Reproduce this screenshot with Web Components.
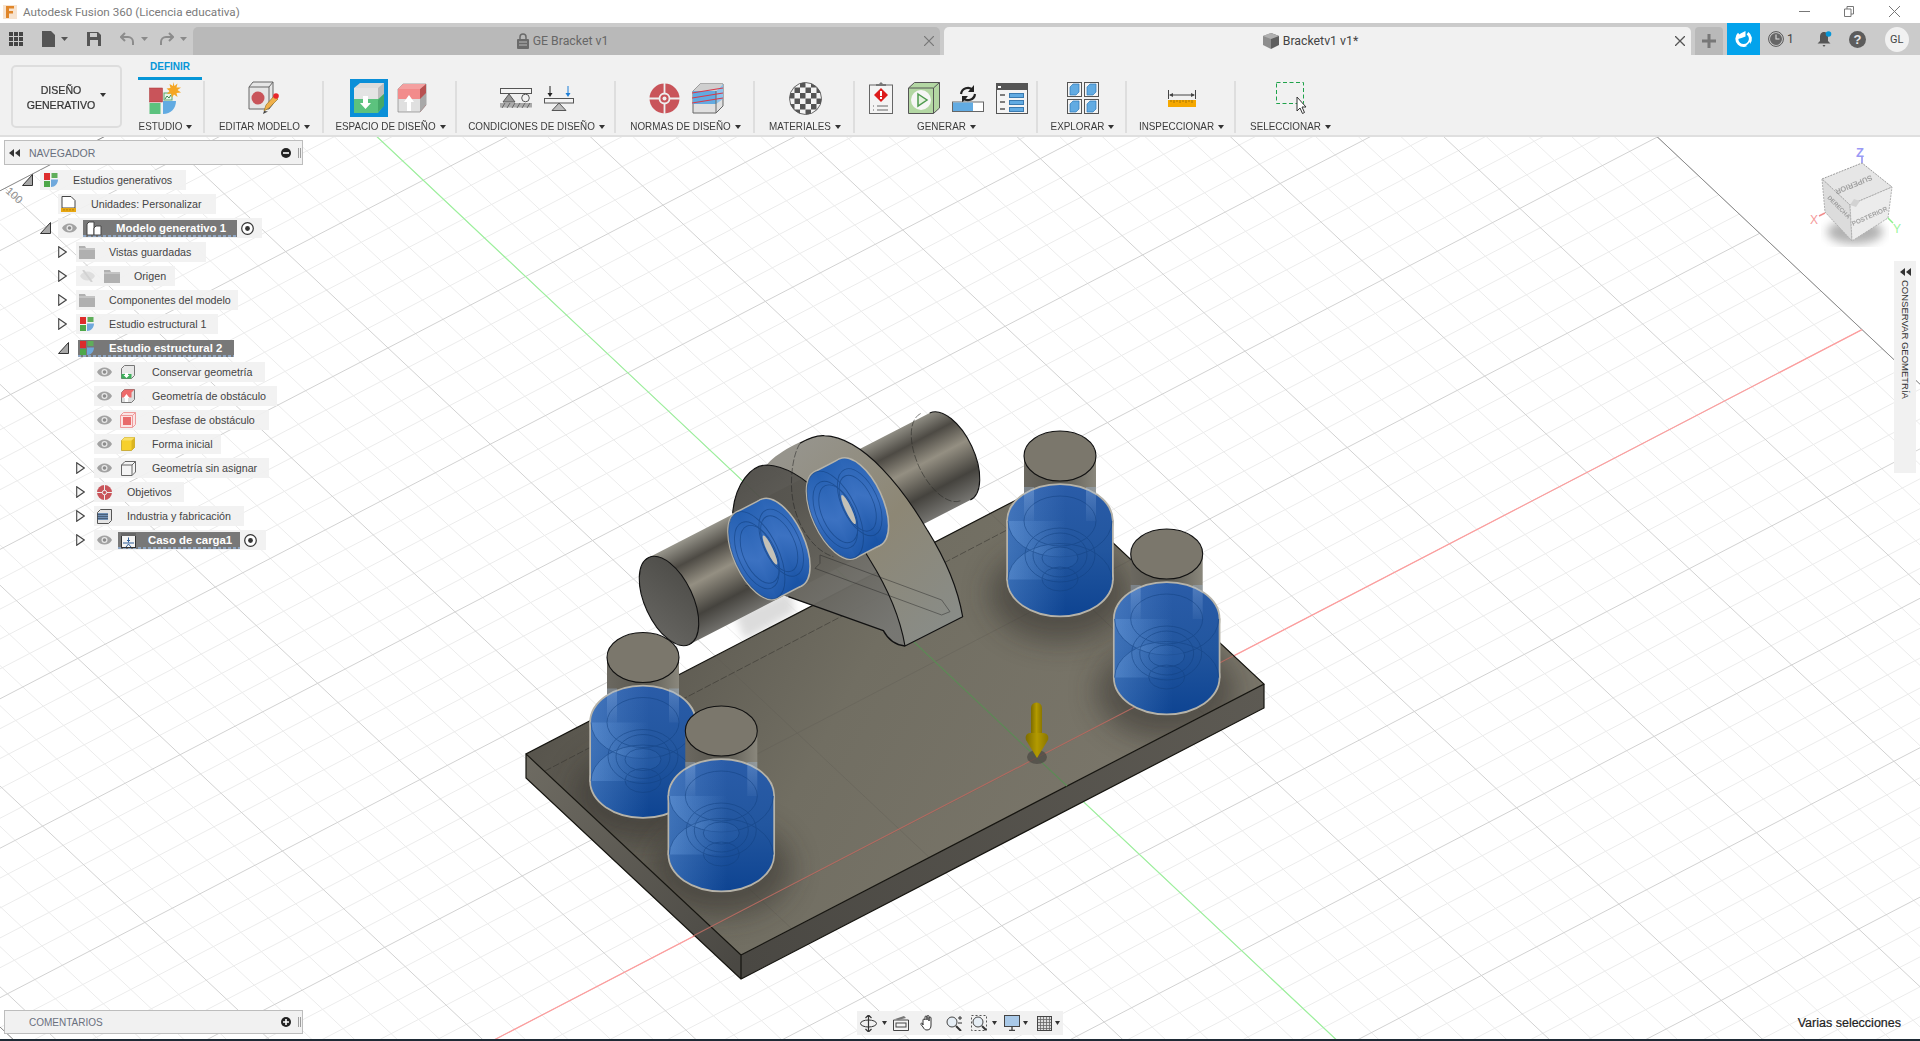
<!DOCTYPE html>
<html lang="es">
<head>
<meta charset="utf-8">
<title>Autodesk Fusion 360</title>
<style>
  html, body { margin: 0; height: 100%; overflow: hidden; background: #fff; font-family: "Liberation Sans", Arial, sans-serif; }
  svg { display: block; }
</style>
</head>
<body>
<fusion-app>
  <title-bar></title-bar>
  <tab-bar></tab-bar>
  <ribbon-bar>
    <rib-group label="ESTUDIO" width="67" shift="12">
      <svg width="33" height="32" viewBox="0 0 33 32"><rect x="0.5" y="6" width="13" height="14" fill="#c9545a" stroke="#a33" stroke-width=".5"/><rect x="0.5" y="21" width="11" height="11" fill="#5cc27e"/><path d="M14 19h13c0 7-5 13-13 13z" fill="#62abe2"/><rect x="15" y="11" width="8" height="7" fill="#e8f4e8" stroke="#5aa56a"/><path d="M16 17l2-3 2 2 2-3" fill="none" stroke="#3a8a50"/><path d="M24 0l1.5 4 3-2.500-1 4 4.500 0-3.500 2.500 3.500 2.500-4.500.5 1 4-3.500-2.500-2 3-1-4-4 .5 2.500-3-3-2.500 4-.5-1-4 3.500 2z" fill="#f5a623"/></svg>
    </rib-group>
    <rib-group label="EDITAR MODELO" width="119">
      <svg width="33" height="34" viewBox="0 0 33 34"><path d="M1 6l4-5h20v22l-4 5H1z" fill="#e6e6e6" stroke="#666"/><path d="M1 6h20v22M21 6l4-5" fill="none" stroke="#666"/><circle cx="10" cy="17" r="6.500" fill="#c9545a"/><path d="M16 30l2-6 8-9 4 3-9 9z" fill="#f0b04a" stroke="#8a6a20" stroke-width=".6"/><path d="M15 33l1-3 4 .5z" fill="#444"/><circle cx="28" cy="15" r="2.800" fill="#e8252a"/></svg>
    </rib-group>
    <rib-group label="ESPACIO DE DISEÑO" width="133" gap="9">
      <svg width="38" height="38" viewBox="0 0 38 38" style="margin:-1px 0 0 -5px"><rect width="38" height="38" fill="#0a8fd8"/><path d="M4 9l6-5h24v22l-6 6H4z" fill="#dcdcdc"/><path d="M4 9h24l6-5-6 5v11H4z" fill="#e4e4e4"/><path d="M28 9l6-5v12l-6 6z" fill="#bdbdbd"/><path d="M4 20h24l6-5v11l-6 8H4z" fill="#5cc27e"/><path d="M28 21l6-6v12l-6 6z" fill="#45a868"/><path d="M13 17h5v7h3l-5.500 6-5.500-6h3z" fill="#fff"/></svg>
      <svg width="30" height="31" viewBox="0 0 30 31"><path d="M1 6l5-5h23v21l-6 7H1z" fill="#e0e0e0" stroke="#777" stroke-width=".6"/><path d="M1 6h22v10H1z" fill="#f28b8b"/><path d="M1 6l5-5h23l-6 5z" fill="#f4a0a0"/><path d="M23 6l6-5v21l-6 7z" fill="#b85050"/><path d="M23 16l6-6v12l-6 7z" fill="#a8a8a8"/><path d="M10 28v-9H7l5-7 5 7h-3v9z" fill="#fff"/></svg>
    </rib-group>
    <rib-group label="CONDICIONES DE DISEÑO" width="159" gap="12">
      <svg width="32" height="20" viewBox="0 0 32 20"><rect x=".5" y=".5" width="31" height="5" fill="#f4f4f4" stroke="#555"/><path d="M9 6l6 8H3z" fill="#999" stroke="#555"/><circle cx="25.500" cy="10" r="3.800" fill="#f4f4f4" stroke="#555"/><rect y="15" width="32" height="4.500" fill="#aaa"/><path d="M2 20l3-5M7 20l3-5M12 20l3-5M17 20l3-5M22 20l3-5M27 20l3-5" stroke="#666"/></svg>
      <svg width="30" height="25" viewBox="0 0 30 25"><path d="M6 0v9" stroke="#222"/><path d="M3.500 7l2.500 4 2.500-4z" fill="#222"/><path d="M24 0v9" stroke="#1d7fd8"/><path d="M21.500 7l2.500 4 2.500-4z" fill="#1d7fd8"/><rect x=".5" y="12.500" width="29" height="4.500" fill="#f4f4f4" stroke="#555"/><path d="M15 17l7 7.500H8z" fill="#bbb" stroke="#555"/></svg>
    </rib-group>
    <rib-group label="NORMAS DE DISEÑO" width="139" gap="12">
      <svg width="31" height="31" viewBox="0 0 31 31" style="margin-left:1px"><circle cx="15.500" cy="15.500" r="15" fill="#c9545a"/><path d="M0 15.500h31M15.500 0v31" stroke="#eee" stroke-width="1.800"/><circle cx="15.500" cy="15.500" r="5" fill="#c9545a" stroke="#eee" stroke-width="1.800"/><circle cx="15.500" cy="15.500" r="2" fill="#eee"/></svg>
      <svg width="32" height="31" viewBox="0 0 32 31"><path d="M1 8l7-7h23v22l-7 7H1z" fill="#e0e0e0" stroke="#666"/><path d="M1 8h23v13H1z" fill="#62abe2"/><path d="M24 8l7-7v15l-7 5z" fill="#8cc3ec"/><path d="M1 8l7-7h23l-7 7z" fill="#cfcfcf"/><path d="M24 8v22" stroke="#666"/><path d="M0 10l31-5M0 15l31-5M0 20l31-5" stroke="#d8394a" stroke-width="1.200"/></svg>
    </rib-group>
    <rib-group label="MATERIALES" width="100">
      <checker-icon></checker-icon>
    </rib-group>
    <rib-group label="GENERAR" width="183" gap="12">
      <svg width="24" height="32" viewBox="0 0 24 32" style="margin-left:4px"><rect x=".5" y="3" width="23" height="28.500" fill="#f4f4f4" stroke="#666"/><path d="M7 4V2h3l2-2 2 2h3v2z" fill="#777"/><path d="M12 6l7 7-7 7-7-7z" fill="#dd1c1c"/><rect x="11" y="9" width="2" height="5" fill="#fff"/><rect x="11" y="15" width="2" height="2" fill="#fff"/><path d="M4 24h1M8 24h11M4 28h1M8 28h11" stroke="#666" stroke-width="1.200"/></svg>
      <svg width="32" height="32" viewBox="0 0 32 32" style="margin-left:3px"><path d="M.5 6l6-5.500h25V26l-6 5.500H.5z" fill="#b3d7a3" stroke="#555"/><path d="M.5 6h25v25.500M25.500 6l6-5.500" fill="none" stroke="#555"/><circle cx="13" cy="18" r="10" fill="#f6f6f6"/><path d="M10 12l9 6-9 6z" fill="#e6f2e0" stroke="#4e9a4e" stroke-width="1.500"/></svg>
      <svg width="32" height="27" viewBox="0 0 32 27"><path d="M9 9a7 7 0 0 1 12-4M23 9a7 7 0 0 1-12 4" fill="none" stroke="#222" stroke-width="2.200"/><path d="M22 0v7h-6z" fill="#222"/><path d="M10 18v-7h6z" fill="#222"/><rect x=".5" y="17" width="31" height="9.500" fill="#fff" stroke="#666"/><rect x="1" y="17.500" width="20" height="8.500" fill="#62abe2"/></svg>
      <svg width="32" height="31" viewBox="0 0 32 31"><rect x=".5" y=".5" width="31" height="30" fill="#f4f4f4" stroke="#555"/><rect width="32" height="7" fill="#555"/><rect x="2" y="3" width="3" height="2" fill="#fff"/><path d="M4 12h5M4 19h5M4 26h5" stroke="#555" stroke-width="1.300"/><rect x="13.500" y="10.500" width="14" height="4" fill="#62abe2" stroke="#3a7ab0"/><rect x="13.500" y="17.500" width="14" height="4" fill="#62abe2" stroke="#3a7ab0"/><rect x="13.500" y="24.500" width="14" height="4" fill="#62abe2" stroke="#3a7ab0"/></svg>
    </rib-group>
    <rib-group label="EXPLORAR" width="89">
      <svg width="32" height="32" viewBox="0 0 32 32"><g><rect x=".5" y=".5" width="14" height="14" fill="#f4f4f4" stroke="#555"/><path d="M3 5l3-3h6v8l-3 3H3z" fill="#62abe2" stroke="#2f7ab8" stroke-width=".7"/></g><g transform="translate(17 0)"><rect x=".5" y=".5" width="14" height="14" fill="#f4f4f4" stroke="#555"/><path d="M3 5l3-3h6v8l-3 3H3z" fill="#62abe2" stroke="#2f7ab8" stroke-width=".7"/></g><g transform="translate(0 17)"><rect x=".5" y=".5" width="14" height="14" fill="#f4f4f4" stroke="#555"/><path d="M3 5l3-3h6v8l-3 3H3z" fill="#62abe2" stroke="#2f7ab8" stroke-width=".7"/></g><g transform="translate(17 17)"><rect x=".5" y=".5" width="14" height="14" fill="#f4f4f4" stroke="#555"/><path d="M3 5l3-3h6v8l-3 3H3z" fill="#62abe2" stroke="#2f7ab8" stroke-width=".7"/></g></svg>
    </rib-group>
    <rib-group label="INSPECCIONAR" width="109">
      <svg width="28" height="17" viewBox="0 0 28 17"><path d="M.5 0v9M27.500 0v9M2 5h24" stroke="#444"/><path d="M1 5l4-2v4zM27 5l-4-2v4z" fill="#444"/><rect y="10" width="28" height="7" fill="#f5a800"/><path d="M3 10v2M6 10v3M9 10v2M12 10v3M15 10v2M18 10v3M21 10v2M24 10v3" stroke="#8a6200" stroke-width=".7"/></svg>
    </rib-group>
    <rib-group label="SELECCIONAR" width="109" last>
      <svg width="32" height="32" viewBox="0 0 32 32" style="margin-left:2px"><rect x=".5" y=".5" width="27" height="21" fill="none" stroke="#1fa24a" stroke-dasharray="4 2.500"/><path d="M21 15v14l3-3 2.500 5.500 2-1-2.500-5.500h4z" fill="#fff" stroke="#333"/></svg>
    </rib-group>
  </ribbon-bar>
  <view-port></view-port>
</fusion-app>

<script>
class FusionApp extends HTMLElement {
  connectedCallback() {
    this.attachShadow({ mode: "open" });
    this.shadowRoot.innerHTML = `
      <style>
        :host { display: flex; flex-direction: column; width: 1920px; height: 1041px; overflow: hidden;
                font-family: "Liberation Sans", Arial, sans-serif; color: #3c3c3c; }
      </style>
      <slot></slot>`;
  }
}

class TitleBar extends HTMLElement {
  connectedCallback() {
    this.attachShadow({ mode: "open" });
    this.shadowRoot.innerHTML = `
      <style>
        :host { display: flex; align-items: center; height: 23px; background: #fff; padding-left: 3px; flex: none; }
        .name { margin-left: 6px; font: 11.7px Roboto, sans-serif; color: #7b7b7b; flex: 1; }
        .win { display: flex; align-items: center; }
        .win svg { display: block; }
      </style>
      <svg width="14" height="14" viewBox="0 0 14 14"><rect width="14" height="14" fill="#f7e3cf"/><path d="M3 1h8v2.500H6v2.500h4v2.500H6V13H3z" fill="#e0862a"/></svg>
      <span class="name">Autodesk Fusion 360 (Licencia educativa)</span>
      <div class="win">
        <svg width="11" height="11" viewBox="0 0 11 11" style="margin-right:34px"><path d="M0 5.500h11" stroke="#777"/></svg>
        <svg width="10" height="11" viewBox="0 0 10 11" style="margin-right:35px"><path d="M.5 3h6.500v7.500H.5zM3 3V.5h6.500V8H7" fill="none" stroke="#777"/></svg>
        <svg width="11" height="11" viewBox="0 0 11 11" style="margin-right:20px"><path d="M0 0l11 11M11 0L0 11" stroke="#777"/></svg>
      </div>`;
  }
}

class TabBar extends HTMLElement {
  connectedCallback() {
    this.attachShadow({ mode: "open" });
    const drop = `<svg width="7" height="4" viewBox="0 0 7 4"><path d="M0 0h7L3.500 4z" fill="#555"/></svg>`;
    this.shadowRoot.innerHTML = `
      <style>
        :host { display: flex; align-items: flex-end; height: 32px; background: #cbcbcb; flex: none; }
        .tools { display: flex; align-items: center; width: 193px; height: 32px; padding-left: 9px; box-sizing: border-box; }
        .tab { display: flex; align-items: center; justify-content: center; position: relative; width: 747px; height: 28px;
               box-sizing: border-box; font: 12.3px Roboto, sans-serif; border-radius: 5px 5px 0 0; }
        .tab.off { background: #b9b9b9; color: #666; margin-right: 4px; padding-right: 8px; }
        .tab.on { background: #f1f1f1; color: #444; margin-right: 4px; padding-right: 14px; }
        .tab span { margin-left: 4px; }
        .x { position: absolute; right: 6px; top: 9px; }
        .plus { display: flex; align-items: center; justify-content: center; width: 28px; height: 28px; background: #b9b9b9;
                border-radius: 4px 4px 0 0; margin-right: 4px; }
        .cloud { display: flex; align-items: center; justify-content: center; width: 33px; height: 32px; background: #03a3ec; }
        .right { display: flex; align-items: center; height: 32px; flex: 1; }
        .num { font: 12px Roboto, sans-serif; color: #444; margin-left: 3px; }
        .avatar { width: 24px; height: 25px; border-radius: 50%; background: #f1f1f1; margin-left: 19px;
                  display: flex; align-items: center; justify-content: center; font: 11px Roboto, sans-serif; color: #444; }
      </style>
      <div class="tools">
        <svg width="14" height="14" viewBox="0 0 14 14" fill="#444"><rect width="4" height="4"/><rect x="5" width="4" height="4"/><rect x="10" width="4" height="4"/><rect y="5" width="4" height="4"/><rect x="5" y="5" width="4" height="4"/><rect x="10" y="5" width="4" height="4"/><rect y="10" width="4" height="4"/><rect x="5" y="10" width="4" height="4"/><rect x="10" y="10" width="4" height="4"/></svg>
        <svg width="13" height="16" viewBox="0 0 13 16" style="margin-left:19px"><path d="M0 0h9l4 4v12H0z" fill="#555"/></svg>
        <span style="margin-left:6px;display:flex">${drop}</span>
        <svg width="14" height="14" viewBox="0 0 14 14" style="margin-left:19px"><path d="M0 0h11l3 3v11H0z" fill="#555"/><rect x="3" y="1" width="7" height="4" fill="#cbcbcb"/><rect x="3" y="8" width="8" height="6" fill="#cbcbcb"/></svg>
        <svg width="14" height="14" viewBox="0 0 14 14" style="margin-left:19px"><path d="M5 1L1 5l4 4M1 5h7a5 5 0 0 1 5 5v3" fill="none" stroke="#8c8c8c" stroke-width="2"/></svg>
        <span style="margin-left:7px;display:flex;opacity:.55">${drop}</span>
        <svg width="14" height="14" viewBox="0 0 14 14" style="margin-left:12px"><path d="M9 1l4 4-4 4M13 5H6a5 5 0 0 0-5 5v3" fill="none" stroke="#8c8c8c" stroke-width="2"/></svg>
        <span style="margin-left:6px;display:flex;opacity:.55">${drop}</span>
      </div>
      <div class="tab off">
        <svg width="12" height="16" viewBox="0 0 12 16"><path d="M3 7V4a3 3 0 0 1 6 0v3" fill="none" stroke="#6a6a6a" stroke-width="1.500"/><rect y="6" width="12" height="10" rx="1" fill="#6a6a6a"/><path d="M2 9h8M2 12h8" stroke="#b9b9b9"/></svg>
        <span>GE Bracket v1</span>
        <svg class="x" width="10" height="10" viewBox="0 0 10 10"><path d="M0 0l10 10M10 0L0 10" stroke="#777" stroke-width="1.200"/></svg>
      </div>
      <div class="tab on">
        <svg width="16" height="16" viewBox="0 0 16 16"><path d="M8 0l8 3v9l-8 4z" fill="#5f5f5f"/><path d="M8 0L0 3v9l8 4z" fill="#8e8e8e"/><path d="M0 3l8-3 8 3-8 3z" fill="#b0b0b0"/></svg>
        <span>Bracketv1 v1*</span>
        <svg class="x" width="10" height="10" viewBox="0 0 10 10"><path d="M0 0l10 10M10 0L0 10" stroke="#555" stroke-width="1.300"/></svg>
      </div>
      <div class="plus"><svg width="14" height="14" viewBox="0 0 14 14"><path d="M7 0v14M0 7h14" stroke="#777" stroke-width="3"/></svg></div>
      <div class="cloud"><svg width="18" height="18" viewBox="0 0 18 18"><path d="M12.500 3.200a6.800 6.800 0 1 1-8.500.6" fill="none" stroke="#fff" stroke-width="3"/><path d="M3 9a6 6 0 0 1 3.500-6l4-2v5.500l-4 1.500z" fill="#fff"/><path d="M11 16l4-4v5z" fill="#03a3ec"/></svg></div>
      <div class="right">
        <svg width="16" height="16" viewBox="0 0 16 16" style="margin-left:8px"><circle cx="8" cy="8" r="7.400" fill="none" stroke="#555"/><circle cx="8" cy="8" r="6" fill="#666"/><path d="M8 3.500V8h3.500" fill="none" stroke="#ddd" stroke-width="1.100"/></svg>
        <span class="num">1</span>
        <svg width="15" height="17" viewBox="0 0 15 17" style="margin-left:23px"><path d="M7 1c3 0 4 2.500 4 5v4l2.500 2.500h-13L3 10V6c0-2.500 1-5 4-5z" fill="#555"/><path d="M5.500 14h3L7 16z" fill="#555"/><circle cx="11.500" cy="3" r="2.800" fill="#0696d7"/></svg>
        <svg width="17" height="17" viewBox="0 0 17 17" style="margin-left:17px"><circle cx="8.500" cy="8.500" r="8.500" fill="#5c5c5c"/><text x="8.500" y="13" font-family="Liberation Sans" font-size="13" font-weight="700" fill="#e6e6e6" text-anchor="middle">?</text></svg>
        <div class="avatar">GL</div>
      </div>`;
  }
}

class RibbonBar extends HTMLElement {
  connectedCallback() {
    this.attachShadow({ mode: "open" });
    this.shadowRoot.innerHTML = `
      <style>
        :host { display: flex; height: 82px; box-sizing: border-box; background: #f1f1f1; border-bottom: 2px solid #dfdfdf;
                padding-left: 11px; flex: none; }
        .mode { width: 111px; height: 63px; margin: 10px 16px 0 0; box-sizing: border-box; border: 2px solid #dddddd; border-radius: 5px;
                display: flex; align-items: center; justify-content: center; font-size: 10.6px; line-height: 14px;
                text-align: center; color: #333; -webkit-text-stroke: .2px #333; gap: 5px; }
        .mode span { transform: scaleY(1.1); }
        .mode i { border: 3px solid transparent; border-top: 4px solid #333; border-bottom: 0; margin-bottom: 4px; }
        .side { display: flex; flex-direction: column; }
        .head { height: 25px; flex: none; }
        .head span { display: block; box-sizing: border-box; width: 64px; height: 25px; text-align: center; padding-top: 6px;
                     border-bottom: 3px solid #0696d7; color: #0696d7; font-size: 10px; font-weight: 700; }
        .groups { display: flex; }
      </style>
      <div class="mode"><span>DISEÑO<br>GENERATIVO</span><i></i></div>
      <div class="side">
        <div class="head"><span>DEFINIR</span></div>
        <div class="groups"><slot></slot></div>
      </div>`;
  }
}

class RibGroup extends HTMLElement {
  connectedCallback() {
    this.attachShadow({ mode: "open" });
    const w = this.getAttribute("width"), shift = this.getAttribute("shift") || 0, gap = this.getAttribute("gap") || 0;
    const line = this.hasAttribute("last") ? "none" : "2px solid #dedede";
    this.shadowRoot.innerHTML = `
      <style>
        :host { display: block; width: ${w}px; height: 54px; box-sizing: border-box; position: relative; flex: none; }
        .col { display: flex; flex-direction: column; align-items: center; height: 54px; padding-right: ${shift}px; box-sizing: border-box; }
        .sep { position: absolute; right: 0; top: 1px; bottom: 1px; border-right: ${line}; }
        .icons { display: flex; align-items: center; justify-content: center; height: 36px; gap: ${gap}px; }
        .label { display: flex; align-items: center; gap: 4px; margin-top: 5px; font-size: 9.9px; line-height: 12px; color: #3c3c3c; white-space: nowrap; }
        .label b { font-weight: 400; transform: scaleY(1.14); }
        .label i { border: 3px solid transparent; border-top: 4px solid #333; border-bottom: 0; }
        ::slotted(svg) { display: block; }
      </style>
      <div class="col">
        <div class="icons"><slot></slot></div>
        <div class="label"><b>${this.getAttribute("label")}</b><i></i></div>
      </div>
      <div class="sep"></div>`;
  }
}

class CheckerIcon extends HTMLElement {
  connectedCallback() {
    this.attachShadow({ mode: "open" });
    let cells = "";
    for (let r = 0; r < 6; r++) for (let c = 0; c < 6; c++)
      if ((r + c) % 2 === 0) cells += `<rect x="${c * 5.5}" y="${r * 5.5}" width="5.5" height="5.5"/>`;
    this.shadowRoot.innerHTML = `
      <style>:host { display: block; } svg { display: block; }</style>
      <svg width="33" height="33" viewBox="0 0 33 33">
        <clipPath id="ball"><ellipse cx="16.500" cy="16.500" rx="16" ry="16"/></clipPath>
        <circle cx="16.500" cy="16.500" r="16" fill="#f4f4f4" stroke="#666"/>
        <g clip-path="url(#ball)" fill="#555">${cells}</g>
      </svg>`;
  }
}

/* small icons of the browser tree */
const eye = `<svg width="15" height="10" viewBox="0 0 15 10"><path d="M0 5c3-6 12-6 15 0-3 6-12 6-15 0z" fill="#a2a2a2"/><circle cx="7.500" cy="5" r="3" fill="#e8e8e8"/><circle cx="7.500" cy="5" r="1.800" fill="#8c8c8c"/></svg>`;
const eyeOff = `<svg width="15" height="12" viewBox="0 0 15 12"><path d="M0 6c3-6 12-6 15 0-3 6-12 6-15 0z" fill="#dedede"/><path d="M3 0l9 12" stroke="#d2d2d2" stroke-width="2"/></svg>`;
const folder = `<svg width="16" height="13" viewBox="0 0 16 13"><path d="M0 0h6l1 2h9v11H0z" fill="#b0b0b0"/><path d="M0 3h16" stroke="#d8d8d8"/></svg>`;
const study = `<svg width="14" height="14" viewBox="0 0 14 14"><rect width="6" height="7" fill="#dd2c2c"/><rect x="7.500" width="6" height="5" fill="#5fae5a"/><rect y="8" width="6" height="6" fill="#4ea84a"/><path d="M7 6.500h7c0 4-3 7.500-7 7.500z" fill="#6fa8dc"/></svg>`;
const units = `<svg width="15" height="16" viewBox="0 0 15 16"><path d="M1 .5h9l4 4V12H1z" fill="#fff" stroke="#444"/><rect y="12" width="15" height="4" fill="#e8a712"/><path d="M3 13v1.500M6 13v1.500M9 13v1.500M12 13v1.500" stroke="#7a5a00" stroke-width=".6"/></svg>`;
const model = `<svg width="16" height="15" viewBox="0 0 16 15"><path d="M1 3l2-2h5v13H1z" fill="#fff" stroke="#444"/><path d="M8 7l2-2h5v9H8z" fill="#fff" stroke="#444"/></svg>`;
const cubeG = `<svg width="14" height="14" viewBox="0 0 14 14"><path d="M.5 3.500l3-3h10v10l-3 3H.5z" fill="#e8e8e8" stroke="#777"/><path d="M.5 9h10v4.500H.5z" fill="#3db05b"/><path d="M4 8h3v2h1.500l-3 3-3-3H4z" fill="#fff"/></svg>`;
const cubeR = `<svg width="14" height="14" viewBox="0 0 14 14"><path d="M.5 3.500l3-3h10v10l-3 3H.5z" fill="#ddd" stroke="#777"/><path d="M.5 3.500l3-3h10l-3 3v5H.5z" fill="#ee6a6a"/><path d="M4 13V9H2.500l3-4 3 4H7v4z" fill="#fff"/></svg>`;
const cubeO = `<svg width="16" height="16" viewBox="0 0 16 16"><path d="M.5 3.500l3-3h12v12l-3 3H.5z" fill="#fbe4e4" stroke="#ee9a9a"/><path d="M.5 3.500h12v12M12.500 3.500l3-3" fill="none" stroke="#ee9a9a"/><rect x="3" y="5" width="8" height="8" fill="#e86a6a"/></svg>`;
const cubeY = `<svg width="14" height="14" viewBox="0 0 14 14"><path d="M.5 3.500l3-3h10v10l-3 3H.5z" fill="#f7d02c" stroke="#b99a1a" stroke-width=".7"/><path d="M10.500 3.500l3-3v10l-3 3z" fill="#dcb520"/><path d="M.5 3.500l3-3h10l-3 3z" fill="#f9df68"/></svg>`;
const cubeW = `<svg width="15" height="15" viewBox="0 0 15 15"><path d="M.5 4l3.500-3.500H14.500V11l-3.500 3.500H.5z" fill="#f4f4f4" stroke="#666"/><path d="M.5 4H11v10.500M11 4l3.500-3.500" fill="none" stroke="#666"/></svg>`;
const goals = `<svg width="15" height="15" viewBox="0 0 15 15"><circle cx="7.500" cy="7.500" r="7.500" fill="#c9545a"/><path d="M0 7.500h15M7.500 0v15" stroke="#eee"/><circle cx="7.500" cy="7.500" r="2.200" fill="#c9545a" stroke="#eee"/></svg>`;
const mfg = `<svg width="15" height="15" viewBox="0 0 15 15"><path d="M.5 3.500l3-3h11v11l-3 3H.5z" fill="#e4e4e4" stroke="#555"/><rect x="1" y="4" width="10" height="7" fill="#6f8fb5"/><path d="M0 5.500h11M0 7.500h11M0 9.500h11" stroke="#3a4a60" stroke-width=".7"/></svg>`;
const load = `<svg width="15" height="15" viewBox="0 0 15 15"><rect x=".5" y=".5" width="14" height="14" fill="#f4f4f4" stroke="#333"/><rect y="0" width="15" height="3" fill="#666"/><path d="M2 10h11M7.500 4.500v5M6 7.500h3M5 14l2.500-3 2.500 3" fill="none" stroke="#2f5f9a"/></svg>`;
const radio = `<svg width="13" height="13" viewBox="0 0 13 13"><circle cx="6.500" cy="6.500" r="5.800" fill="#fff" stroke="#333" stroke-width="1.200"/><circle cx="6.500" cy="6.500" r="2.400" fill="#333"/></svg>`;

class ModelTree extends HTMLElement {
  connectedCallback() {
    this.attachShadow({ mode: "open" });
    const m = (html, left) => `<span style="margin-left:${left}px;display:flex;flex:none">${html}</span>`;
    const txt = (s, left) => `<span class="t" style="margin-left:${left}px">${s}</span>`;
    const open = `<svg width="11" height="12" viewBox="0 0 11 12"><path d="M10.500 .5V11.500H.5z" fill="#a8a8a8" stroke="#333"/></svg>`;
    const closed = `<svg width="9" height="12" viewBox="0 0 9 12"><path d="M.7 .7L8.300 6 .7 11.300z" fill="#f6f6f6" stroke="#444" stroke-width="1.100"/></svg>`;
    const bar = (w, html) => `<span class="bar" style="width:${w}px">${html}</span>`;
    const rows = [
      [0, open, 146, m(study, 4) + txt("Estudios generativos", 15)],
      [1, "", 158, m(units, 3) + txt("Unidades: Personalizar", 15)],
      [1, open, 204, m(eye, 4) + m(bar(154, m(model, 3) + txt("Modelo generativo 1", 14)), 6) + m(radio, 4)],
      [2, closed, 130, m(folder, 3) + txt("Vistas guardadas", 14)],
      [2, closed, 99, m(eyeOff, 4) + m(folder, 9) + txt("Origen", 14)],
      [2, closed, 162, m(folder, 3) + txt("Componentes del modelo", 14)],
      [2, closed, 142, m(study, 4) + txt("Estudio estructural 1", 15)],
      [2, open, 158, m(bar(156, m(study, 2) + txt("Estudio estructural 2", 15)), 2), true],
      [3, "", 171, m(eye, 3) + m(cubeG, 9) + txt("Conservar geometría", 17)],
      [3, "", 183, m(eye, 3) + m(cubeR, 9) + txt("Geometría de obstáculo", 17)],
      [3, "", 175, m(eye, 3) + m(cubeO, 8) + txt("Desfase de obstáculo", 16)],
      [3, "", 127, m(eye, 3) + m(cubeY, 9) + txt("Forma inicial", 17)],
      [3, closed, 175, m(eye, 3) + m(cubeW, 9) + txt("Geometría sin asignar", 16)],
      [3, closed, 90, m(goals, 3) + txt("Objetivos", 15)],
      [3, closed, 150, m(mfg, 3) + txt("Industria y fabricación", 15)],
      [3, closed, 172, m(eye, 3) + m(bar(122, m(load, 3) + txt("Caso de carga1", 12)), 6) + m(radio, 4)],
    ];
    this.shadowRoot.innerHTML = `
      <style>
        :host { display: block; font-size: 10.7px; color: #444; }
        .row { display: flex; align-items: center; height: 24px; }
        .tri { width: 18px; flex: none; display: flex; }
        .box { display: flex; align-items: center; height: 20px; background: rgba(241,241,241,.92); overflow: hidden; }
        .box.plain { background: none; }
        .t { white-space: nowrap; }
        .bar { display: flex; align-items: center; height: 17px; background: #787878; color: #fff; font-weight: 700; font-size: 11.4px;
               background-image: repeating-linear-gradient(90deg, #8ea6c4 0 3px, transparent 3px 5px);
               background-size: 100% 2px; background-repeat: no-repeat; background-position: bottom; }
      </style>
      ${rows.map(r => `<div class="row" style="padding-left:${22 + r[0] * 18}px">
        <span class="tri">${r[1]}</span>
        <div class="box${r[4] ? " plain" : ""}" style="width:${r[2]}px">${r[3]}</div>
      </div>`).join("")}`;
  }
}

class SidePanelHead extends HTMLElement {
  connectedCallback() {
    this.attachShadow({ mode: "open" });
    const title = this.getAttribute("title");
    const mark = this.getAttribute("mark");
    this.shadowRoot.innerHTML = `
      <style>
        :host { display: flex; align-items: center; width: 299px; box-sizing: border-box; height: var(--h, 25px); background: #f1f1f1;
                border: 1px solid #bdbdbd; font-size: var(--fs, 10.5px); color: #69707e; }
        .back { width: 24px; padding-left: 4px; box-sizing: border-box; flex: none; }
        .t { flex: 1; }
        .end { display: flex; align-items: center; gap: 7px; margin-right: 1px; }
      </style>
      <div class="back">${this.hasAttribute("back") ? `<svg width="11" height="8" viewBox="0 0 11 8"><path d="M5 0v8L0 4zM11 0v8L6 4z" fill="#333"/></svg>` : ""}</div>
      <span class="t">${title}</span>
      <div class="end">
        <svg width="10" height="10" viewBox="0 0 10 10"><circle cx="5" cy="5" r="5" fill="#222"/><path d="M2 5h6${mark === "plus" ? "M5 2v6" : ""}" stroke="#fff" stroke-width="1.600"/></svg>
        <svg width="3" height="10" viewBox="0 0 3 10"><path d="M.5 0v10M2.500 0v10" stroke="#888" stroke-width=".8"/></svg>
      </div>`;
  }
}

class NavTools extends HTMLElement {
  connectedCallback() {
    this.attachShadow({ mode: "open" });
    const drop = (l) => `<svg width="5" height="4" viewBox="0 0 5 4" style="margin-left:${l}px"><path d="M0 0h5L2.500 4z" fill="#333"/></svg>`;
    let cells = "";
    for (let i = 1; i < 5; i++) cells += `M${i * 3 + .5} 1v13M1 ${i * 3 + .5}h13`;
    this.shadowRoot.innerHTML = `
      <style>
        :host { display: flex; align-items: center; width: 206px; height: 24px; background: #f1f1f1; padding-left: 3px; box-sizing: border-box; }
        svg { display: block; flex: none; }
      </style>
      <svg width="17" height="17" viewBox="0 0 17 17"><ellipse cx="8.500" cy="8.500" rx="8" ry="3.500" fill="none" stroke="#333"/><path d="M8.500 0v17M5.500 3l3-3 3 3M5.500 14l3 3 3-3" fill="none" stroke="#333" stroke-width="1.200"/></svg>
      ${drop(5)}
      <svg width="16" height="16" viewBox="0 0 16 16" style="margin-left:6px"><path d="M.5 5h15v10.500H.5z" fill="#f4f4f4" stroke="#444"/><rect x="3" y="8" width="10" height="4" fill="none" stroke="#444"/><path d="M2 4l9-3 2 2-8 2z" fill="#777"/></svg>
      <svg width="16" height="16" viewBox="0 0 16 16" style="margin-left:10px"><path d="M4 10V5a1 1 0 0 1 2 0V2a1 1 0 0 1 2 0v3V1.500a1 1 0 0 1 2 0V6V3a1 1 0 0 1 2 0v7c0 3-1 5-4 5-2 0-3-1-4-3L2 9.500c-.6-1 .8-2 1.500-1z" fill="#fff" stroke="#333"/></svg>
      <svg width="16" height="16" viewBox="0 0 16 16" style="margin-left:11px"><circle cx="6" cy="7" r="5" fill="#e6eef5" stroke="#444"/><path d="M10 11l5 5" stroke="#333" stroke-width="2"/><path d="M12 3h4M14 1v4M12 8h4" stroke="#333"/></svg>
      <svg width="16" height="16" viewBox="0 0 16 16" style="margin-left:9px"><path d="M.5.5h15v15H.5z" fill="none" stroke="#555" stroke-dasharray="2 2"/><circle cx="7" cy="7" r="5" fill="#e6eef5" stroke="#444"/><path d="M11 11l4 4" stroke="#333" stroke-width="2"/></svg>
      ${drop(5)}
      <svg width="16" height="16" viewBox="0 0 16 16" style="margin-left:7px"><rect x=".5" y=".5" width="15" height="11" fill="#a9c9e8" stroke="#444"/><path d="M5 15.500h6M8 12v3" stroke="#444" stroke-width="1.400"/></svg>
      ${drop(3)}
      <svg width="15" height="15" viewBox="0 0 15 15" style="margin-left:9px"><rect x=".5" y=".5" width="14" height="14" fill="#ddd" stroke="#444"/><path d="${cells}" stroke="#666" stroke-width=".8"/></svg>
      ${drop(3)}`;
  }
}

class ViewCube extends HTMLElement {
  connectedCallback() {
    this.attachShadow({ mode: "open" });
    this.shadowRoot.innerHTML = `
      <style>:host { display: block; width: 100px; height: 110px; } svg { display: block; }</style>
      <svg width="100" height="110" viewBox="1810 140 100 110" font-family="Liberation Sans, sans-serif">
        <defs><filter id="soft"><feGaussianBlur stdDeviation="5"/></filter></defs>
        <ellipse cx="1855" cy="232" rx="28" ry="12" fill="#555" opacity=".45" filter="url(#soft)"/>
        <path d="M1822 179l40-16 30 24-42 18z" fill="#e6e6e6" stroke="#9a9a9a" stroke-dasharray="2 1"/>
        <path d="M1822 179l3 33 27 29-2-36z" fill="#dcdcdc" stroke="#b0b0b0" stroke-dasharray="2 1"/>
        <path d="M1850 205l42-18-4 31-36 23z" fill="#ececec" stroke="#b0b0b0" stroke-dasharray="2 1"/>
        <path d="M1850 205l4-6 6 2-4 6z" fill="#d2d2d2"/>
        <g opacity=".75">
        <text font-size="7.500" fill="#8a8a8a" font-weight="700" transform="translate(1871 175) rotate(158)">SUPERIOR</text>
        <text font-size="6" fill="#8a8a8a" font-weight="700" transform="translate(1827 198) rotate(45)">DERECHA</text>
        <text font-size="6.500" fill="#8a8a8a" font-weight="700" transform="translate(1853 226) rotate(-24)">POSTERIOR</text>
        </g>
        <path d="M1862 163v-6" stroke="#8c8cf0" stroke-width="1.500"/>
        <text x="1856" y="157" font-size="13" font-weight="700" fill="#9a9af5">Z</text>
        <path d="M1825 213l-6 3" stroke="#f08c8c" stroke-width="1.500"/>
        <text x="1810" y="224" font-size="12" fill="#f59a9a">X</text>
        <path d="M1888 218l5 5" stroke="#8cf08c" stroke-width="1.500"/>
        <text x="1893" y="233" font-size="12" fill="#9af59a">Y</text>
      </svg>`;
  }
}

class ViewPort extends HTMLElement {
  connectedCallback() {
    this.attachShadow({ mode: "open" });
    const O = [1037, 758], A = [137.5, -71.4], B = [102.3, 96.3];
    const pt = (i, j) => [O[0] + i * A[0] + j * B[0], O[1] + i * A[1] + j * B[1]];
    const seg = (p, q, extra) => `<line x1="${p[0].toFixed(1)}" y1="${p[1].toFixed(1)}" x2="${q[0].toFixed(1)}" y2="${q[1].toFixed(1)}" ${extra}/>`;
    const I0 = -6.2, I1 = 6, J0 = -7.4, J1 = 8;

    let minor = "", major = "";
    for (let k = Math.round(I0 * 5); k <= I1 * 5; k++) {
      const l = seg(pt(k / 5, J0), pt(k / 5, J1), "");
      if (k % 5 === 0) major += l; else minor += l;
    }
    for (let k = Math.round(J0 * 5); k <= J1 * 5; k++) {
      const l = seg(pt(I0, k / 5), pt(I1, k / 5), "");
      if (k % 5 === 0) major += l; else minor += l;
    }

    // union of two ellipses and the band between them
    const hull = (c1, c2, rx, ry, rot) => {
      const a = rot * Math.PI / 180, len = Math.hypot(c2[0] - c1[0], c2[1] - c1[1]);
      const dx = (c2[0] - c1[0]) / len, dy = (c2[1] - c1[1]) / len;
      const lx = dx * Math.cos(a) + dy * Math.sin(a), ly = -dx * Math.sin(a) + dy * Math.cos(a);
      const t = Math.atan2(-lx / rx, ly / ry);
      const ex = rx * Math.cos(t), ey = ry * Math.sin(t);
      const px = ex * Math.cos(a) - ey * Math.sin(a), py = ex * Math.sin(a) + ey * Math.cos(a);
      const e = (c) => `<ellipse cx="${c[0]}" cy="${c[1]}" rx="${rx}" ry="${ry}" transform="rotate(${rot} ${c[0]} ${c[1]})"/>`;
      return e(c1) + e(c2) + `<polygon points="${c1[0] + px},${c1[1] + py} ${c2[0] + px},${c2[1] + py} ${c2[0] - px},${c2[1] - py} ${c1[0] - px},${c1[1] - py}"/>`;
    };

    let defs = "", shadows = "";
    const cyl = (n, cx, cy) => {
      const bot = cy + 58.5, pin = cy - 65;
      defs += `<linearGradient id="bl${n}" gradientUnits="userSpaceOnUse" x1="0" y1="${cy - 36}" x2="0" y2="${bot + 36}"><stop offset="0" stop-color="#2a5ca8"/><stop offset=".5" stop-color="#22569f"/><stop offset="1" stop-color="#0e4492"/></linearGradient>
        <linearGradient id="hl${n}" gradientUnits="userSpaceOnUse" x1="${cx - 52}" y1="0" x2="${cx + 6}" y2="0"><stop offset="0" stop-color="#7fb2f0" stop-opacity=".3"/><stop offset="1" stop-color="#7fb2f0" stop-opacity="0"/></linearGradient>
        <linearGradient id="pn${n}" gradientUnits="userSpaceOnUse" x1="${cx - 36}" y1="0" x2="${cx + 36}" y2="0"><stop offset="0" stop-color="#6b6860"/><stop offset=".5" stop-color="#5a5850"/><stop offset="1" stop-color="#8a877c"/></linearGradient>
        <linearGradient id="st${n}" gradientUnits="userSpaceOnUse" x1="0" y1="${cy - 36}" x2="0" y2="${cy + 8}"><stop offset="0" stop-color="#a9c8ef" stop-opacity=".32"/><stop offset="1" stop-color="#a9c8ef" stop-opacity="0"/></linearGradient>`;
      shadows += `<ellipse cx="${cx}" cy="${bot + 14}" rx="70" ry="48" fill="#35332d" opacity=".55" filter="url(#blur)"/>`;
      const hullB = hull([cx, bot], [cx, cy], 52, 36, 0);
      const arc = (y, rx, ry) => `<ellipse cx="${cx}" cy="${y}" rx="${rx}" ry="${ry}"/>`;
      return `
        <rect x="${cx - 36}" y="${pin}" width="72" height="${cy - pin}" fill="url(#pn${n})"/>
        <g stroke="#b6b3a9" stroke-width="3.500" fill="#b6b3a9" stroke-linejoin="round">${hullB}</g>
        <g fill="url(#bl${n})">${hullB}</g>
        <g fill="url(#hl${n})">${hullB}</g>
        <path d="M${cx - 36} ${cy - 34}v34h10v-34z M${cx + 26} ${cy - 34}v34h10v-34z" fill="url(#st${n})"/>
        <g fill="none" stroke="#12407f" stroke-width="1" opacity=".5">
          <path d="M${cx - 52} ${cy}a52 36 0 0 0 104 0"/>
          ${arc(cy, 36, 25)}
          <path d="M${cx - 52} ${bot}a52 36 0 0 1 104 0"/>
          ${arc(cy + 34, 35, 27)}
          ${arc(cy + 34, 27, 22)}
          <ellipse cx="${cx}" cy="${cy + 37}" rx="18" ry="11" fill="#3e75bf" fill-opacity=".35"/>
          ${arc(cy + 58, 18, 12)}
        </g>
        <ellipse cx="${cx}" cy="${pin}" rx="36" ry="25" fill="#7b776c" stroke="#111" stroke-width="1.100"/>`;
    };
    const cylinders = cyl(1, 1060, 521) + cyl(2, 1166.7, 619) + cyl(3, 643, 722.5) + cyl(4, 721.3, 796);

    const ring = (n, cx, cy) => {
      const c1 = [cx - 12.2, cy + 6.3], c2 = [cx + 12.2, cy - 6.3], R = 65;
      defs += `<linearGradient id="rg${n}" gradientUnits="userSpaceOnUse" x1="${cx - 40}" y1="${cy - 20}" x2="${cx + 30}" y2="${cy + 30}"><stop offset="0" stop-color="#2560b2"/><stop offset=".5" stop-color="#3c72c2"/><stop offset="1" stop-color="#1a54a6"/></linearGradient>`;
      const h = hull(c1, c2, 47, 22, R);
      const oval = (c, rx, ry) => `<ellipse cx="${c[0]}" cy="${c[1]}" rx="${rx}" ry="${ry}" transform="rotate(${R} ${c[0]} ${c[1]})"/>`;
      return `
        <g stroke="#b6b3a9" stroke-width="3" fill="#b6b3a9" stroke-linejoin="round">${h}</g>
        <g fill="url(#rg${n})">${h}</g>
        <g fill="none" stroke="#12407f" stroke-width=".9" opacity=".6">
          ${oval(c1, 47, 22)}${oval(c1, 36, 18)}${oval([c1[0] + 3, c1[1] - 1], 31, 16)}${oval(c2, 36, 18)}${oval([c2[0] - 2, c2[1] + 1], 30, 15)}
        </g>
        ${oval([cx + 1, cy + 1], 16, 3).replace("<ellipse", '<ellipse fill="#c4c1b7"')}`;
    };

    this.shadowRoot.innerHTML = `
      <style>
        :host { display: block; position: relative; flex: 1; background: #fff; overflow: hidden; border-bottom: 2px solid #1e2a35; }
        svg.scene { display: block; }
        .nav { position: absolute; left: 4px; top: 3px; }
        .tree { position: absolute; left: 0; top: 31px; }
        .fb { position: absolute; left: 4px; top: 873px; --h: 24px; --fs: 10px; }
        .tools { position: absolute; left: 857px; top: 874px; }
        .status { position: absolute; right: 19px; top: 879px; font-size: 12.5px; color: #222; -webkit-text-stroke: .2px #222; }
        .cube { position: absolute; left: 1810px; top: 3px; }
        .keep { position: absolute; left: 1894px; top: 124px; width: 22px; height: 212px; background: #f1f1f1;
                display: flex; flex-direction: column; align-items: center; padding-top: 7px; box-sizing: border-box; }
        .keep span { writing-mode: vertical-rl; font-size: 9.5px; color: #333; margin-top: 4px; white-space: nowrap; }
      </style>
      <svg class="scene" width="1920" height="902" viewBox="0 137 1920 902">
        <defs>
          <filter id="blur" x="-50%" y="-50%" width="200%" height="200%"><feGaussianBlur stdDeviation="14"/></filter>
          <filter id="blur2" x="-30%" y="-30%" width="160%" height="160%"><feGaussianBlur stdDeviation="4"/></filter>
          <linearGradient id="top" gradientUnits="userSpaceOnUse" x1="620" y1="600" x2="1100" y2="860"><stop offset="0" stop-color="#58554d"/><stop offset=".45" stop-color="#716e62"/><stop offset="1" stop-color="#7a766a"/></linearGradient>
          <linearGradient id="fl" gradientUnits="userSpaceOnUse" x1="526" y1="760" x2="741" y2="960"><stop offset="0" stop-color="#6e6b62"/><stop offset="1" stop-color="#4a4843"/></linearGradient>
          <linearGradient id="fr" gradientUnits="userSpaceOnUse" x1="741" y1="960" x2="1264" y2="690"><stop offset="0" stop-color="#4a4843"/><stop offset="1" stop-color="#5d5a53"/></linearGradient>
          <linearGradient id="body" gradientUnits="userSpaceOnUse" x1="787" y1="485" x2="832.6" y2="571.7">
            <stop offset="0" stop-color="#98968c"/><stop offset=".22" stop-color="#4d4a44"/><stop offset=".45" stop-color="#948f82"/>
            <stop offset=".75" stop-color="#45433e"/><stop offset="1" stop-color="#767571"/>
          </linearGradient>
          <linearGradient id="cap" gradientUnits="userSpaceOnUse" x1="650" y1="560" x2="690" y2="640"><stop offset="0" stop-color="#4a4945"/><stop offset="1" stop-color="#696864"/></linearGradient>
          <linearGradient id="band" gradientUnits="userSpaceOnUse" x1="520" y1="150" x2="1000" y2="650"><stop offset="0" stop-color="#96948c"/><stop offset=".5" stop-color="#8d8775"/><stop offset="1" stop-color="#898c87"/></linearGradient>
          <linearGradient id="face" gradientUnits="userSpaceOnUse" x1="380" y1="250" x2="820" y2="680"><stop offset="0" stop-color="#4f4d48"/><stop offset=".55" stop-color="#65635c"/><stop offset="1" stop-color="#777773"/></linearGradient>
          <linearGradient id="arrow" x1="0" y1="0" x2="1" y2="0"><stop offset="0" stop-color="#7d6c00"/><stop offset=".5" stop-color="#b39a00"/><stop offset="1" stop-color="#8a7600"/></linearGradient>
          <clipPath id="plateClip"><polygon points="526,754 1049,483 1264,684 741,955"/></clipPath>
        </defs>

        <g stroke="#ececec" fill="none">${minor}</g>
        <g stroke="#d2d2d2" fill="none">${major}</g>
        ${seg(pt(I1, J0), pt(I1, J1), 'stroke="#8a8a8a"')}
        ${seg(pt(I0, J0), pt(I1, J0), 'stroke="#8a8a8a"')}
        ${seg(pt(I0, J0), pt(I0, J1), 'stroke="#8a8a8a"')}
        ${seg(pt(I0, 0), pt(I1, 0), 'stroke="#ff9c9c" stroke-width="1.200"')}
        ${seg(pt(0, J0), pt(0, J1), 'stroke="#9cf29c" stroke-width="1.200"')}
        <text font-family="Liberation Sans, sans-serif" font-size="11" fill="#8f8f8f" transform="translate(5 192) rotate(42)">100</text>

        <polygon points="735,615 790,590 795,612 745,640" fill="#dcdcdc" filter="url(#blur2)"/>

        <polygon points="526,754 1049,483 1264,684 741,955" fill="url(#top)"/>
        <g clip-path="url(#plateClip)"><g stroke="#5f5c54" fill="none" opacity=".35">${major}</g><g data-shadows></g></g>
        <polygon points="526,754 741,955 741,979 526,778" fill="url(#fl)"/>
        <polygon points="741,955 1264,684 1264,708 741,979" fill="url(#fr)"/>
        <path d="M1049 483L526 754L741 955L1264 684L1049 483M526 754V778L741 979L1264 708V684M741 955V979" fill="none" stroke="#15140f" stroke-width="1.200"/>
        <line x1="693" y1="936" x2="1233" y2="656" stroke="#b26a60" stroke-width="1.100"/>
        <line x1="913" y1="641" x2="1067" y2="786" stroke="#5c8c56" stroke-width="1.100"/>
        <line x1="545" y1="771" x2="1007" y2="530" stroke="#35332e" stroke-dasharray="7 2" opacity=".55"/>

        ${cylinders}

        <!-- long cylinder through the bracket, arch and blue rings -->
        <g stroke-linejoin="round">
          <path d="M648.700 557.500L929.700 413A48 24 65 0 1 970.300 500L689.300 644.500Z" fill="url(#body)"/>
          <path d="M929.700 413A48 24 65 0 1 970.300 500" fill="none" stroke="#111" stroke-width="1.100"/>
          <path d="M920.700 413.500A48 24 65 0 0 961.300 500.500" fill="none" stroke="#2a2a26" stroke-width=".8" stroke-dasharray="7 2" opacity=".7"/>
          <ellipse cx="669" cy="601" rx="48" ry="24" transform="rotate(65 669 601)" fill="url(#cap)" stroke="#111" stroke-width="1.100"/>
        </g>
        <g transform="translate(620 400) scale(.33333)" stroke-linejoin="round">
          <path d="M440 195C560 200 680 360 750 480C800 560 840 650 855 738L1028 650C1013 562 973 472 923 392C853 272 733 112 613 107C560 105 460 165 440 195Z" fill="url(#band)"/>
          <path d="M338 340C345 250 395 195 440 195C560 200 680 360 750 480C800 560 840 650 855 738C825 735 805 720 790 692L505 590L375 555Z" fill="url(#face)" fill-opacity=".96"/>
          <path d="M338 340C345 250 395 195 440 195C560 200 680 360 750 480C800 560 840 650 855 738L1028 650C1013 562 973 472 923 392C853 272 733 112 613 107C585 105 560 118 540 130" fill="none" stroke="#111" stroke-width="3.400"/>
          <path d="M505 590L790 692C805 720 825 735 855 738" fill="none" stroke="#111" stroke-width="4"/>
          <path d="M540 130C515 170 505 260 525 330C545 400 590 455 640 470" fill="none" stroke="#222" stroke-width="2.600" stroke-dasharray="20 6" opacity=".6"/>
          <g fill="none" stroke="#222" stroke-width="2.400" opacity=".55">
            <path d="M600 465L965 600M585 505L965 645M600 465V490L585 505M965 600L990 635L965 645"/>
            <path d="M375 555L505 590" stroke-dasharray="16 5"/>
          </g>
        </g>
        ${ring(1, 769, 549)}
        ${ring(2, 847.5, 508.5)}

        <!-- load arrow -->
        <ellipse cx="1037" cy="757" rx="10" ry="7" fill="#4c4a44" opacity=".75"/>
        <path d="M1031 708a5.500 5.500 0 0 1 11 0v27h-11z" fill="url(#arrow)"/>
        <path d="M1030 733h13c5 0 6 4 5 7l-11 18-11-18c-1-3 0-7 4-7z" fill="url(#arrow)"/>
      </svg>
      <side-panel-head class="nav" title="NAVEGADOR" back mark="minus"></side-panel-head>
      <model-tree class="tree"></model-tree>
      <side-panel-head class="fb" title="COMENTARIOS" mark="plus"></side-panel-head>
      <nav-tools class="tools"></nav-tools>
      <view-cube class="cube"></view-cube>
      <div class="keep">
        <svg width="11" height="8" viewBox="0 0 11 8"><path d="M5 0v8L0 4zM11 0v8L6 4z" fill="#333"/></svg>
        <span>CONSERVAR GEOMETRÍA</span>
      </div>
      <div class="status">Varias selecciones</div>`;

    // gradients collected while building the cylinders and rings
    const scene = this.shadowRoot.querySelector("svg.scene");
    const holder = document.createElementNS("http://www.w3.org/2000/svg", "svg");
    holder.innerHTML = defs + shadows;
    const d = scene.querySelector("defs");
    const slot = scene.querySelector("[data-shadows]");
    [...holder.children].forEach(n => (n.tagName === "linearGradient" ? d : slot).appendChild(n));
  }
}

customElements.define("fusion-app", FusionApp);
customElements.define("title-bar", TitleBar);
customElements.define("tab-bar", TabBar);
customElements.define("ribbon-bar", RibbonBar);
customElements.define("rib-group", RibGroup);
customElements.define("checker-icon", CheckerIcon);
customElements.define("model-tree", ModelTree);
customElements.define("side-panel-head", SidePanelHead);
customElements.define("nav-tools", NavTools);
customElements.define("view-cube", ViewCube);
customElements.define("view-port", ViewPort);
</script>
</body>
</html>
